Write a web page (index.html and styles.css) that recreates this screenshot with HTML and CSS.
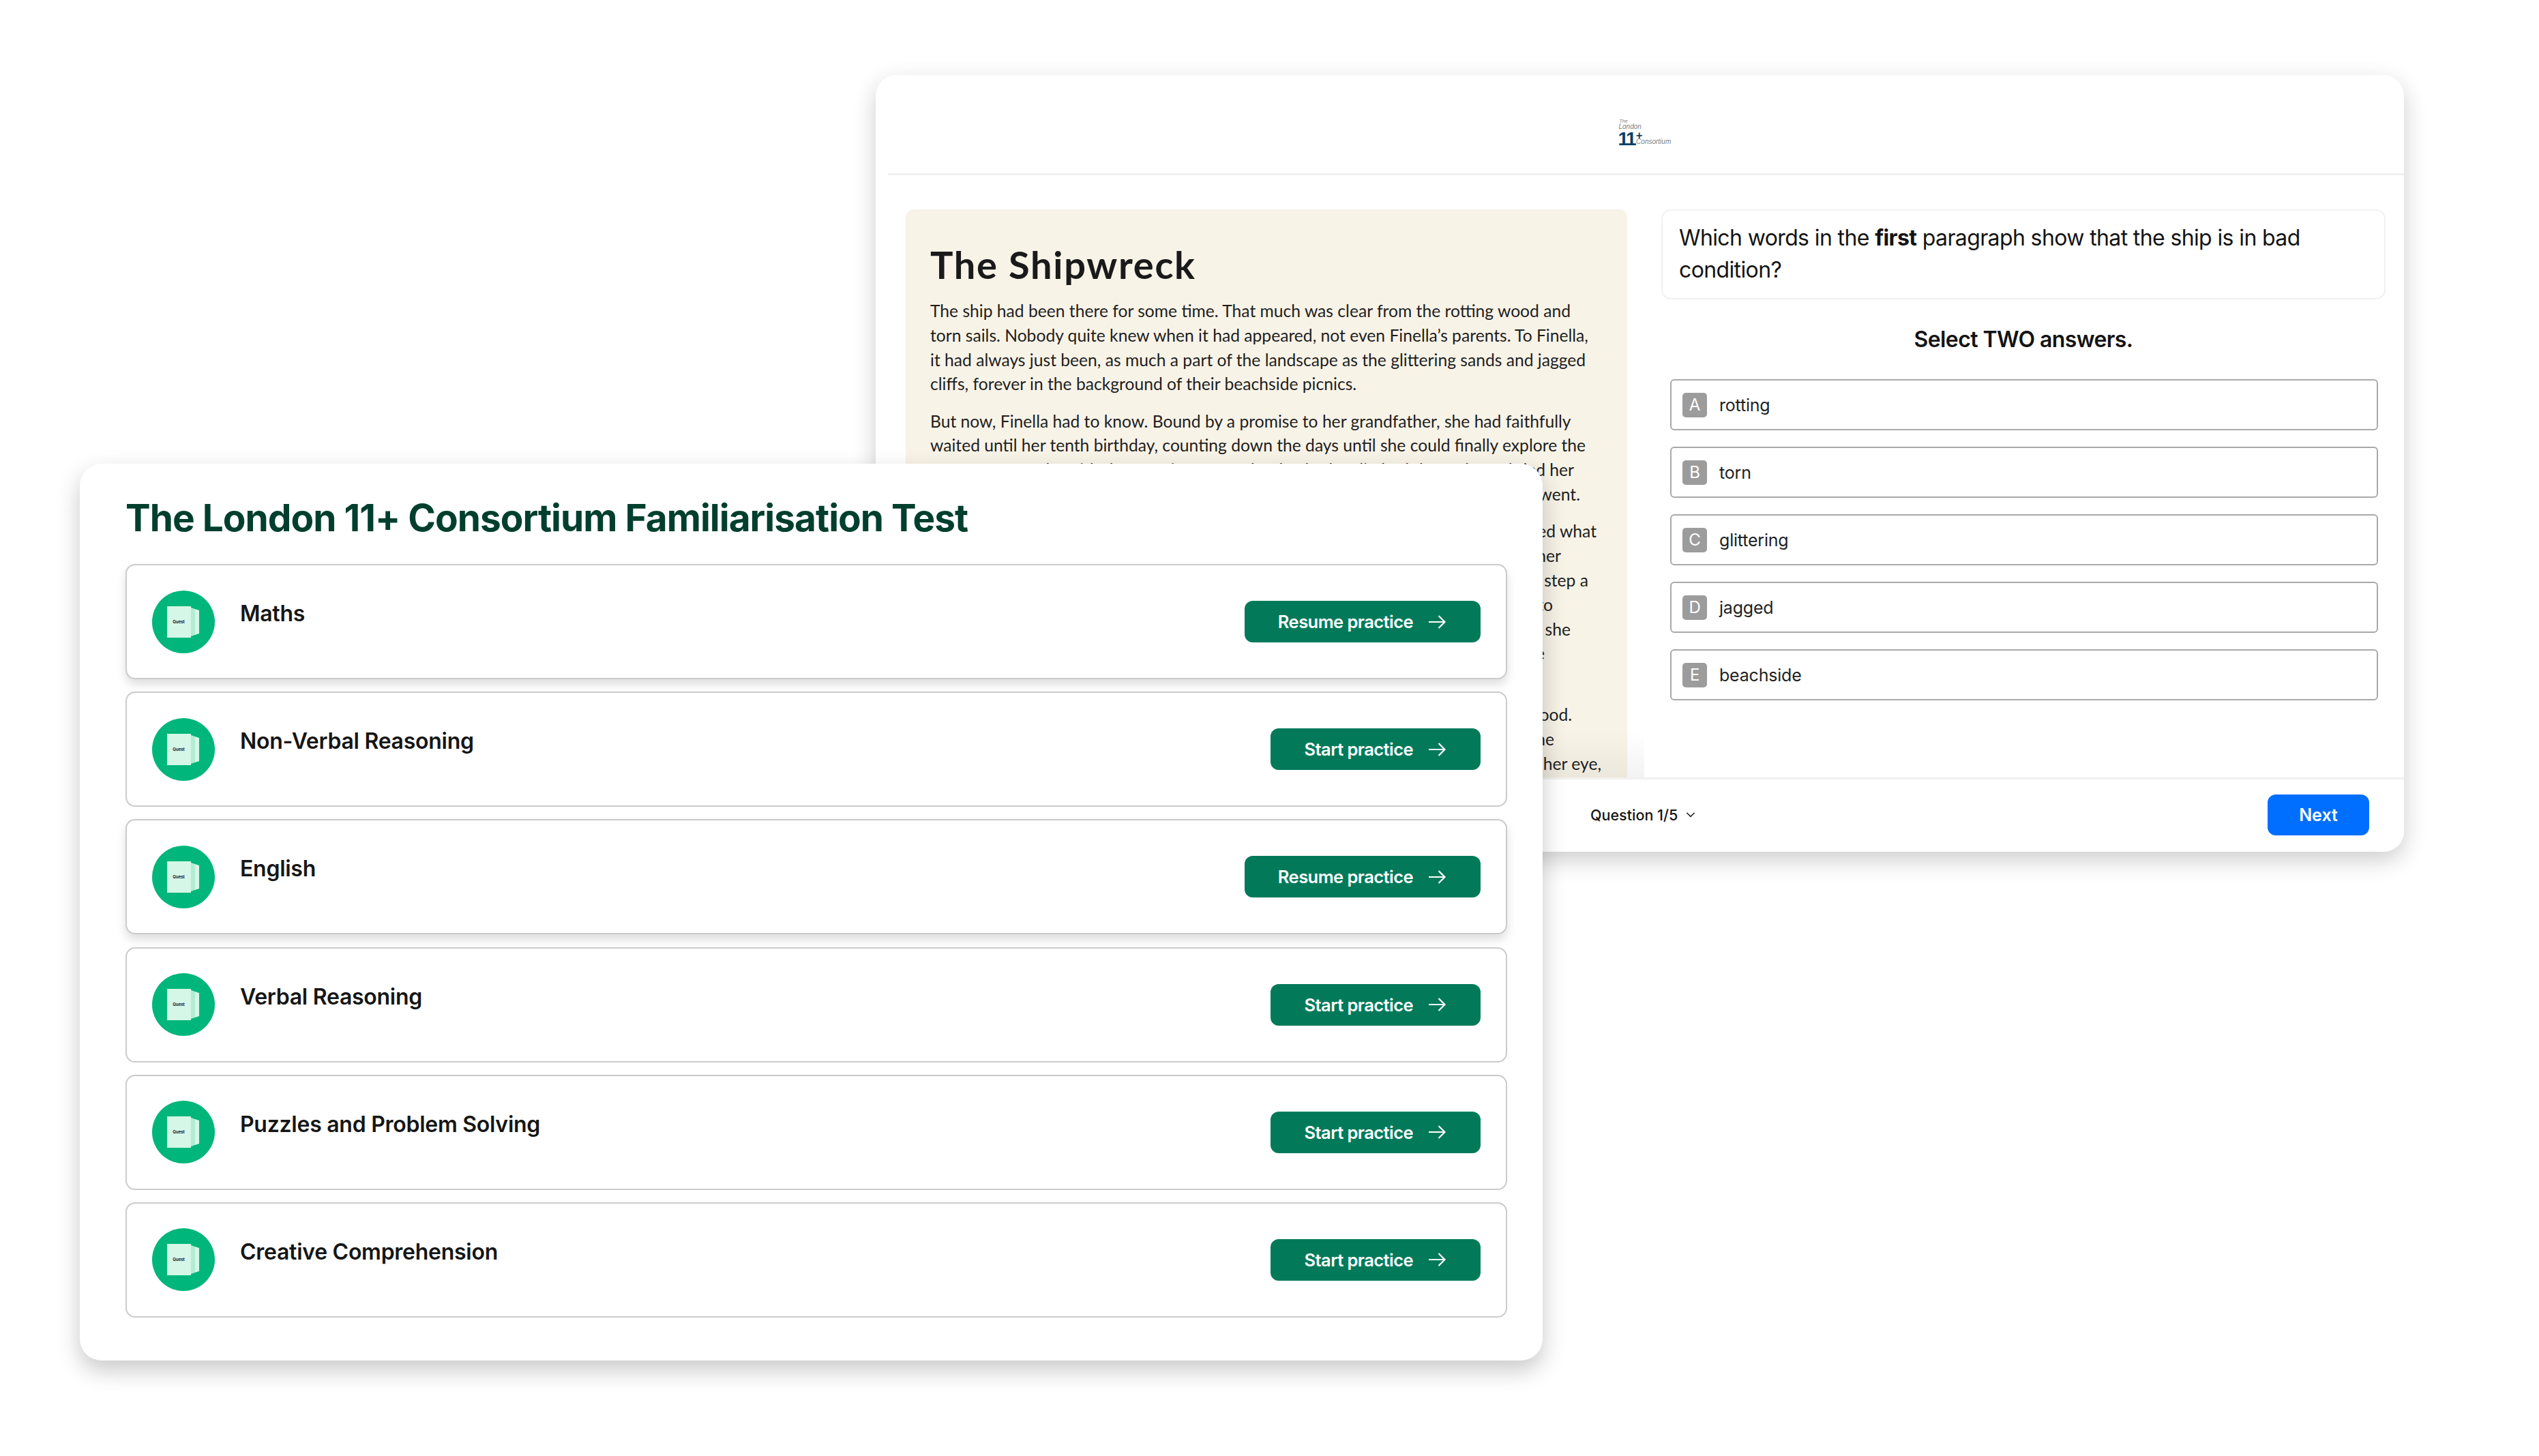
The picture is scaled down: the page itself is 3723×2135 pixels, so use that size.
FILE: index.html
```html
<!DOCTYPE html>
<html lang="en">
<head>
<meta charset="utf-8">
<title>The London 11+ Consortium Familiarisation Test</title>
<link rel="stylesheet" href="styles.css">
</head>
<body>
<svg class="defs" width="0" height="0" aria-hidden="true">
  <symbol id="book-art" viewBox="0 0 92 92">
    <circle cx="46" cy="46" r="46" fill="#00b67a"/>
    <polygon points="63,27 69,29 69,63 63,65" fill="#d5f7e7"/>
    <polygon points="57,25 63,27 63,65 57,67" fill="#b2ecd2"/>
    <rect x="22" y="23" width="35" height="46" fill="#d5f7e7"/>
  </symbol>
  <symbol id="arrow" viewBox="0 0 26 22">
    <path d="M1 11H24.5M15.5 2l9 9-9 9" fill="none" stroke="#fff" stroke-width="2.2"/>
  </symbol>
</svg>

<section class="window back">
  <header class="back-head">
    <div class="logo">
      <span class="logo-the">The</span>
      <span class="logo-london">London</span>
      <span class="logo-row">
        <b class="logo-num">11</b>
        <span class="logo-side"><b class="logo-plus">+</b><span class="logo-cons">Consortium</span></span>
      </span>
    </div>
  </header>
  <div class="back-main">
    <article class="passage">
      <h2 class="passage-title">The Shipwreck</h2>
      <p class="para">
        <span class="ln">The ship had been there for some time. That much was clear from the rotting wood and</span>
        <span class="ln">torn sails. Nobody quite knew when it had appeared, not even Finella’s parents. To Finella,</span>
        <span class="ln">it had always just been, as much a part of the landscape as the glittering sands and jagged</span>
        <span class="ln">cliffs, forever in the background of their beachside picnics.</span>
      </p>
      <p class="para">
        <span class="ln">But now, Finella had to know. Bound by a promise to her grandfather, she had faithfully</span>
        <span class="ln">waited until her tenth birthday, counting down the days until she could finally explore the</span>
        <span class="ln end e-a">wreck. With the morning sun on her back, she climbed the rocks and tied her</span>
        <span class="ln end e-b">shoes tightly, telling nobody where she went.</span>
      </p>
      <p class="para">
        <span class="ln end e-c">As she drew closer, the ship seemed bigger than she had imagined what</span>
        <span class="ln end e-d">it might be, and a strange feeling came over her</span>
        <span class="ln end e-e">as she reached the broken hull. With one careful step a</span>
        <span class="ln end e-f">gap opened up and she slipped through to</span>
        <span class="ln end e-g">the dark space below, where she</span>
        <span class="ln end e-h">waited and listened in the gloom of the little</span>
        <span class="ln">&nbsp;</span>
      </p>
      <p class="para">
        <span class="ln end e-i">The air smelled of salt and of old, damp wood.</span>
        <span class="ln end e-j">She took another step into the</span>
        <span class="ln end e-k">darkness, and then something caught her eye,</span>
      </p>
    </article>
    <div class="quiz">
      <div class="question">Which words in the <b>first</b> paragraph show that the ship is in bad condition?</div>
      <h3 class="select">Select TWO answers.</h3>
      <ul class="options">
        <li class="option"><span class="badge">A</span>rotting</li>
        <li class="option"><span class="badge">B</span>torn</li>
        <li class="option"><span class="badge">C</span>glittering</li>
        <li class="option"><span class="badge">D</span>jagged</li>
        <li class="option"><span class="badge">E</span>beachside</li>
      </ul>
    </div>
    <div class="fade"></div>
  </div>
  <footer class="back-foot">
    <div class="progress">Question 1/5
      <svg class="chev" viewBox="0 0 12 8"><path d="M1 1.5l5 5 5-5" fill="none" stroke="#222" stroke-width="1.4"/></svg>
    </div>
    <button class="next">Next</button>
  </footer>
</section>

<section class="window front">
  <h1 class="front-title">The London 11+ Consortium Familiarisation Test</h1>
  <div class="rows">
    <div class="row active">
      <svg class="book" viewBox="0 0 92 92"><use href="#book-art"/><text x="39" y="47.5" class="book-text" text-anchor="middle">Quest</text></svg>
      <span class="subject">Maths</span>
      <a class="cta">Resume practice<svg class="arrow"><use href="#arrow"/></svg></a>
    </div>
    <div class="row">
      <svg class="book" viewBox="0 0 92 92"><use href="#book-art"/><text x="39" y="47.5" class="book-text" text-anchor="middle">Quest</text></svg>
      <span class="subject">Non-Verbal Reasoning</span>
      <a class="cta">Start practice<svg class="arrow"><use href="#arrow"/></svg></a>
    </div>
    <div class="row active">
      <svg class="book" viewBox="0 0 92 92"><use href="#book-art"/><text x="39" y="47.5" class="book-text" text-anchor="middle">Quest</text></svg>
      <span class="subject">English</span>
      <a class="cta">Resume practice<svg class="arrow"><use href="#arrow"/></svg></a>
    </div>
    <div class="row">
      <svg class="book" viewBox="0 0 92 92"><use href="#book-art"/><text x="39" y="47.5" class="book-text" text-anchor="middle">Quest</text></svg>
      <span class="subject">Verbal Reasoning</span>
      <a class="cta">Start practice<svg class="arrow"><use href="#arrow"/></svg></a>
    </div>
    <div class="row">
      <svg class="book" viewBox="0 0 92 92"><use href="#book-art"/><text x="39" y="47.5" class="book-text" text-anchor="middle">Quest</text></svg>
      <span class="subject">Puzzles and Problem Solving</span>
      <a class="cta">Start practice<svg class="arrow"><use href="#arrow"/></svg></a>
    </div>
    <div class="row">
      <svg class="book" viewBox="0 0 92 92"><use href="#book-art"/><text x="39" y="47.5" class="book-text" text-anchor="middle">Quest</text></svg>
      <span class="subject">Creative Comprehension</span>
      <a class="cta">Start practice<svg class="arrow"><use href="#arrow"/></svg></a>
    </div>
  </div>
</section>
</body>
</html>
```
FILE: styles.css
```css
* { box-sizing: border-box; }
html, body { margin: 0; padding: 0; background: #fff; }
body { width: 3723px; height: 2135px; position: relative; overflow: hidden; font-family: Inter, "Liberation Sans", sans-serif; color: #141414; }
.defs { position: absolute; }
.book-text { font: 700 6px Inter, sans-serif; fill: #123; }

.window { position: absolute; background: #fff; }

/* Back window */
.back { left: 1284px; top: 110px; width: 2241px; height: 1139px; border-radius: 30px; box-shadow: 0 12px 34px rgba(0,0,0,.2); display: flex; flex-direction: column; overflow: hidden; }
.back-head { height: 147px; margin-left: 18px; border-bottom: 3px solid #f1f1f1; display: flex; justify-content: center; align-items: flex-start; padding: 64px 6px 0 0; }
.logo { width: 76px; display: flex; flex-direction: column; font-family: "Liberation Sans", sans-serif; font-style: italic; color: #7a7f85; line-height: 1; }
.logo-the { font-size: 7px; padding-left: 2px; height: 7px; }
.logo-london { font-size: 10px; height: 12px; padding-left: 1px; }
.logo-row { display: flex; height: 20px; }
.logo-num { font: 800 28px/21px "Liberation Sans", sans-serif; color: #0c3f63; letter-spacing: -2.5px; height: 20px; }
.logo-side { display: flex; flex-direction: column; margin-left: 2px; }
.logo-plus { font: 800 16px/11px "Liberation Sans", sans-serif; color: #0c3f63; height: 10px; }
.logo-cons { font-size: 10px; line-height: 10px; white-space: nowrap; }

.back-main { flex: 1; min-height: 0; position: relative; display: flex; gap: 50px; padding: 50px 27px 0 44px; overflow: hidden; }
.passage { width: 1058px; flex: none; background: #f8f3e7; border-radius: 12px 12px 0 0; padding: 46px 0 0 36px; overflow: hidden; font-family: Lato, "Noto Sans", sans-serif; }
.passage-title { margin: 0 0 15px; font: 700 56px/70px Lato, sans-serif; color: #1a1a1a; letter-spacing: 1.7px; }
.para { margin: 0 0 18.5px; font-size: 24.65px; line-height: 35.8px; color: #1e1e1e; }
.ln { display: block; white-space: nowrap; }
.end { text-align: right; }
.e-a { width: 944px; }
.e-b { width: 953px; }
.e-c { width: 977px; }
.e-d { width: 925px; }
.e-e { width: 965px; }
.e-f { width: 913px; }
.e-g { width: 939px; }
.e-h { width: 901px; }
.e-i { width: 941px; }
.e-j { width: 915px; }
.e-k { width: 984px; }
.fade { position: absolute; left: 0; bottom: 0; width: 1127px; height: 70px; background: linear-gradient(rgba(0,0,0,0), rgba(0,0,0,.05)); }

.quiz { flex: 1; min-width: 0; display: flex; flex-direction: column; }
.question { height: 132px; border: 2px solid #f1f1f1; border-radius: 14px; padding: 16px 24px; font-size: 32px; line-height: 47px; letter-spacing: -.62px; }
.question b { font-weight: 700; }
.select { margin: 39px 0 0; text-align: center; font-size: 32px; line-height: 40px; font-weight: 600; letter-spacing: -.6px; }
.options { list-style: none; margin: 38px 0 0; padding: 0 11px 0 13px; display: flex; flex-direction: column; gap: 24px; }
.option { height: 75px; border: 2px solid #a9a9a9; border-radius: 6px; display: flex; align-items: center; padding-left: 16px; gap: 18px; font-size: 25px; letter-spacing: -.2px; color: #222; }
.badge { width: 36px; height: 36px; background: #9c9c9c; color: #fff; border-radius: 5px; display: flex; align-items: center; justify-content: center; font-size: 24px; }

.back-foot { height: 109px; border-top: 3px solid #f1f1f1; display: flex; align-items: center; justify-content: space-between; padding: 0 51px 3px 1048px; margin-top: -3px; position: relative; background: #fff; }
.progress { display: flex; align-items: center; gap: 12px; font-size: 21.5px; font-weight: 500; }
.chev { width: 14px; height: 9px; }
.next { width: 149px; height: 60px; border: 0; border-radius: 12px; background: #006fff; color: #fff; font: 600 25px Inter, sans-serif; }

/* Front window */
.front { left: 117px; top: 680px; width: 2145px; height: 1315px; border-radius: 32px; box-shadow: 0 14px 34px rgba(0,0,0,.22); padding: 45px 52px 0 67px; }
.front-title { margin: 0 0 33px; font-size: 55px; line-height: 69px; font-weight: 700; color: #003f2d; letter-spacing: -1px; }
.rows { display: flex; flex-direction: column; gap: 18.2px; }
.row { height: 169px; border: 2px solid #cbcbcb; border-radius: 14px; display: flex; align-items: center; padding: 0 37px; background: #fff; }
.row.active { box-shadow: 0 8px 14px rgba(0,0,0,.13); }
.book { width: 92px; height: 92px; flex: none; }
.subject { margin: 0 auto 24px 37px; font-size: 32px; font-weight: 600; letter-spacing: -.27px; color: #161616; }
.cta { height: 61px; display: flex; align-items: center; gap: 22px; padding: 0 51px 0 49px; background: #027a5a; color: #fff; border-radius: 12px; font-size: 25.5px; font-weight: 600; letter-spacing: -.55px; }
.arrow { width: 26px; height: 22px; }
```
